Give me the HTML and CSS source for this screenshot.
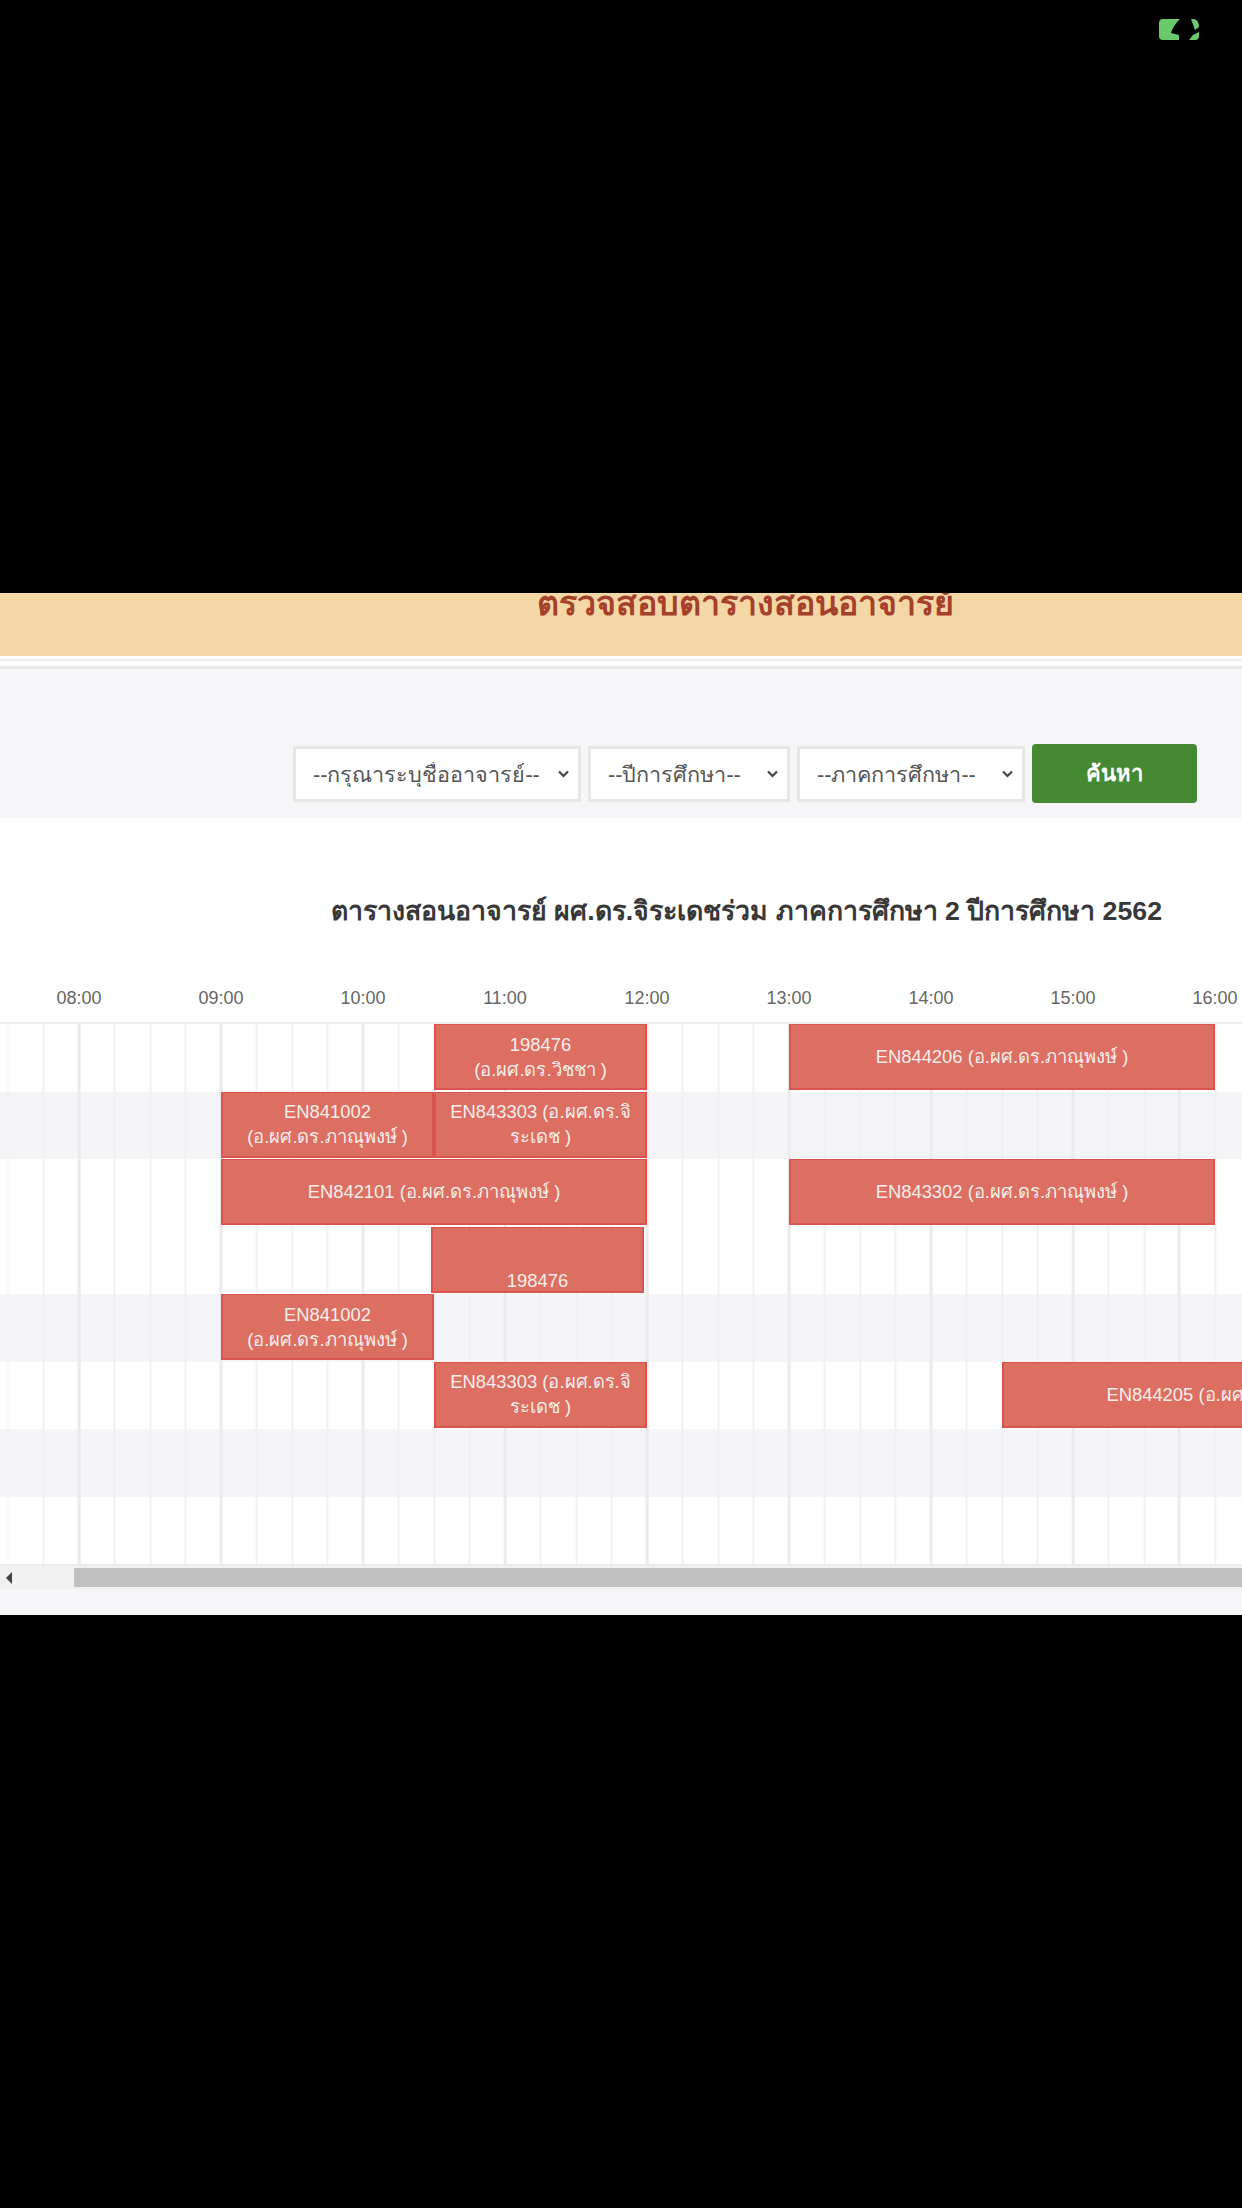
FILE: index.html
```html
<!DOCTYPE html>
<html lang="th">
<head>
<meta charset="UTF-8">
<title>ตรวจสอบตารางสอนอาจารย์</title>
<link rel="stylesheet" href="styles.css">
</head>
<body>
<div class="statusbar">
  <svg class="battery" width="40" height="21" viewBox="0 0 40 21">
    <path d="M4 0 H21 Q14 7 12 14 L20 16 V21 H4 Q0 21 0 17 V4 Q0 0 4 0 Z" fill="#6ac96a"/>
    <path d="M32 0 H35 Q40 1 40 8 L36 11 Z" fill="#6ac96a"/>
    <path d="M40 13 V17 Q40 21 36 21 H30 L34 16 Z" fill="#6ac96a"/>
  </svg>
</div>

<div class="banner"><h1>ตรวจสอบตารางสอนอาจารย์</h1></div>
<div class="gap"></div>

<form class="filter">
  <select class="sel sel-teacher"><option>--กรุณาระบุชื่ออาจารย์--</option></select>
  <select class="sel sel-year"><option>--ปีการศึกษา--</option></select>
  <select class="sel sel-term"><option>--ภาคการศึกษา--</option></select>
  <button type="button" class="btn">ค้นหา</button>
</form>

<div class="content">
  <h2>ตารางสอนอาจารย์ ผศ.ดร.จิระเดชร่วม ภาคการศึกษา 2 ปีการศึกษา 2562</h2>

  <div class="hours">
    <span>08:00</span><span>09:00</span><span>10:00</span><span>11:00</span><span>12:00</span>
    <span>13:00</span><span>14:00</span><span>15:00</span><span>16:00</span>
  </div>

  <div class="table">
    <div class="row">
      <div class="ev s13 e19"><span>198476</span><span>(อ.ผศ.ดร.วิชชา )</span></div>
      <div class="ev s23 e35"><span>EN844206 (อ.ผศ.ดร.ภาณุพงษ์ )</span></div>
    </div>
    <div class="row alt">
      <div class="ev s7 e13"><span>EN841002</span><span>(อ.ผศ.ดร.ภาณุพงษ์ )</span></div>
      <div class="ev s13 e19"><span>EN843303 (อ.ผศ.ดร.จิระเดช )</span></div>
    </div>
    <div class="row">
      <div class="ev s7 e19"><span>EN842101 (อ.ผศ.ดร.ภาณุพงษ์ )</span></div>
      <div class="ev s23 e35"><span>EN843302 (อ.ผศ.ดร.ภาณุพงษ์ )</span></div>
    </div>
    <div class="row">
      <div class="ev s13 e19 shifted"><span>198476</span></div>
    </div>
    <div class="row alt">
      <div class="ev s7 e13"><span>EN841002</span><span>(อ.ผศ.ดร.ภาณุพงษ์ )</span></div>
    </div>
    <div class="row">
      <div class="ev s13 e19"><span>EN843303 (อ.ผศ.ดร.จิระเดช )</span></div>
      <div class="ev s29 e42"><span>EN844205 (อ.ผศ.ดร.ภาณุพงษ์ )</span></div>
    </div>
    <div class="row alt"></div>
    <div class="row"></div>
  </div>

  <div class="scrollbar">
    <div class="scroll-btn"><i></i></div>
    <div class="scroll-thumb"></div>
  </div>
</div>
<div class="foot"></div>
<div class="black"></div>
</body>
</html>
```

FILE: styles.css
```css
html, body {margin:0; padding:0; background:#000;}
body {width:1242px; height:2208px; overflow:hidden; font-family:"Liberation Sans", "Noto Sans", sans-serif;}

.statusbar {height:593px; box-sizing:border-box; padding:19px 43px 0 0; display:flex; justify-content:flex-end; align-items:flex-start; background:#000;}
.battery {display:block;}

.banner {height:63px; background:#f4d7a7; overflow:hidden; text-align:center; padding-left:248px; box-sizing:border-box;}
.banner h1 {margin:-12px 0 0; font-size:34px; line-height:44px; font-weight:bold; color:#a5412a;}

.gap {height:10px; border-bottom:3px solid #e9e9ec; background:linear-gradient(#fff 3px, #ececee 3px, #ececee 5px, #fff 5px);}

.filter {height:149px; background:#f6f6f8; box-sizing:border-box; padding:75px 45px 0 0; display:flex; justify-content:flex-end; align-items:flex-start; gap:7px;}
.sel {
  appearance:none;
  -webkit-appearance:none;
  height:56px;
  margin-top:2px;
  padding:0 24px 0 17px;
  background:#fff url("data:image/svg+xml,%3Csvg xmlns='http://www.w3.org/2000/svg' width='11' height='8' viewBox='0 0 11 8'%3E%3Cpath d='M1 1.5 L5.5 6 L10 1.5' fill='none' stroke='%23444' stroke-width='2.2'/%3E%3C/svg%3E") no-repeat right 9px center;
  border:3px solid #e6e6e6;
  border-radius:0;
  font-family:"Liberation Sans", "Noto Sans", sans-serif;
  font-size:21.6px;
  color:#555;
}
.sel-teacher {width:288px;}
.sel-year {width:202px;}
.sel-term {width:228px;}
.btn {width:165px; height:59px; background:#458a33; color:#fff; border:0; border-radius:4px; font-family:"Liberation Sans", "Noto Sans", sans-serif; font-size:22px; font-weight:bold;}

.content {background:#fff;}
h2 {margin:0; padding:73px 80px 0 0; text-align:right; font-size:26.7px; line-height:40px; font-weight:bold; color:#383838;}

.hours {display:flex; padding:54px 0 0 8px; height:37px; overflow:hidden; font-size:18px; line-height:26px; color:#666;}
.hours span {flex:0 0 142px; text-align:center;}

.table {border-top:2px solid #ececee; overflow:hidden;}
.row {
  display:grid;
  grid-template-columns:repeat(46, 35.5px);
  grid-template-rows:66px;
  height:67.5px;
  padding-left:8px;
  box-sizing:border-box;
  background-color:#fff;
  background-image:
    repeating-linear-gradient(90deg, #ebebed 0, #ebebed 3px, transparent 3px, transparent 142px),
    repeating-linear-gradient(90deg, #f0f0f2 0, #f0f0f2 1.5px, transparent 1.5px, transparent 35.5px);
  background-position:-64.5px 0, 7.5px 0;
}
.alt {background-color:#f5f5f7;}

.ev {
  box-sizing:border-box;
  padding:0 12px;
  display:flex;
  flex-direction:column;
  justify-content:center;
  text-align:center;
  background:#dc6e62;
  border:2px solid #d9534f;
  border-top-width:1px;
  color:#f8efec;
  font-size:18.4px;
  line-height:25px;
  overflow:hidden;
}
.ev span {display:block; white-space:normal;}
.s7 {grid-column-start:7;}
.s13 {grid-column-start:13;}
.s23 {grid-column-start:23;}
.s29 {grid-column-start:29;}
.e13 {grid-column-end:13;}
.e19 {grid-column-end:19;}
.e35 {grid-column-end:35;}
.e42 {grid-column-end:42;}
.s7.e13 {padding:0 4px;}
.shifted {margin-left:-3px; margin-right:3px; padding-top:43px; justify-content:flex-start; line-height:20px;}

.scrollbar {display:flex; height:23px; background:#f1f1f1; border-top:2px solid #ececee;}
.scroll-btn {flex:0 0 74px; display:flex; align-items:center; padding-left:6px; box-sizing:border-box;}
.scroll-btn i {display:block; width:0; height:0; border:6px solid transparent; border-left-width:0; border-right:6px solid #444;}
.scroll-thumb {flex:1; background:#c0c0c0; margin-top:2px; height:19px;}

.foot {height:26px; background:#f6f6f8;}
.black {height:593px; background:#000;}
```
